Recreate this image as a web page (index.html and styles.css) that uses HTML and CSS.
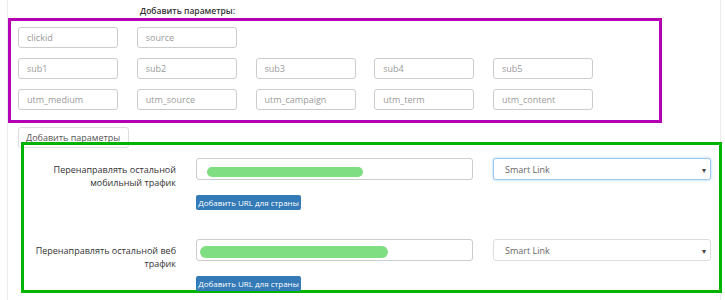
FILE: index.html
```html
<!DOCTYPE html>
<html>
<head>
	<meta charset="utf-8">
	<link rel="stylesheet" href="styles.css">
</head>
<body>
	<div class="panel">
		<div class="params-title">Добавить параметры:</div>

		<div class="params-box">
			<div class="params-grid">
				<input type="text" placeholder="clickid">
				<input type="text" placeholder="source">
				<span></span><span></span><span></span>

				<input type="text" placeholder="sub1">
				<input type="text" placeholder="sub2">
				<input type="text" placeholder="sub3">
				<input type="text" placeholder="sub4">
				<input type="text" placeholder="sub5">

				<input type="text" placeholder="utm_medium">
				<input type="text" placeholder="utm_source">
				<input type="text" placeholder="utm_campaign">
				<input type="text" placeholder="utm_term">
				<input type="text" placeholder="utm_content">
			</div>
		</div>

		<button class="tab-button">Добавить параметры</button>

		<div class="redirect-box">
			<div class="redirect-row">
				<label class="redirect-label">Перенаправлять остальной мобильный трафик</label>
				<div class="url-col">
					<div class="url-input"><span class="hidden-url bar-1"></span></div>
					<button class="add-url">Добавить URL для страны</button>
				</div>
				<div class="link-select focused">Smart Link <span class="caret">&#9662;</span></div>
			</div>

			<div class="redirect-row second">
				<label class="redirect-label">Перенаправлять остальной веб трафик</label>
				<div class="url-col">
					<div class="url-input"><span class="hidden-url bar-2"></span></div>
					<button class="add-url">Добавить URL для страны</button>
				</div>
				<div class="link-select">Smart Link <span class="caret">&#9662;</span></div>
			</div>
		</div>
	</div>
</body>
</html>
```

FILE: styles.css
```css
body {
	margin: 0;
	padding: 0;
	background: #fff;
	font-family: "Open Sans", "Liberation Sans", sans-serif;
	overflow: hidden;
}

.panel {
	margin-left: 7px;
	width: 712px;
	height: 300px;
	border-left: 1px solid #ececec;
	border-right: 1px solid #ececec;
}

.params-title {
	padding: 3px 0 0 132px;
	height: 15px;
	line-height: 15px;
	font-size: 8.5px;
	font-weight: 600;
	color: #333;
}

.params-box {
	width: 641px;
	border: 3px solid #b400b4;
	padding: 6px 0 10px 7px;
}

.params-grid {
	display: grid;
	grid-template-columns: repeat(5, 100px);
	column-gap: 18.75px;
	row-gap: 10px;
}

.params-grid input {
	box-sizing: border-box;
	width: 100px;
	height: 21px;
	border: 1px solid #ccc;
	border-radius: 3px;
	padding: 0 8px;
	font-family: inherit;
	font-size: 9px;
	background: #fff;
}

.params-grid input::placeholder {
	color: #9a9a9a;
}

.tab-button {
	display: block;
	box-sizing: border-box;
	margin: 4px 0 0 10px;
	width: 111px;
	height: 21px;
	padding: 0 0 0 7px;
	text-align: left;
	background: #fff;
	border: 1px solid #ddd;
	border-radius: 3px;
	font-family: inherit;
	font-size: 9px;
	color: #555;
}

.redirect-box {
	position: relative;
	margin: -6px 0 0 13px;
	width: 691px;
	height: 145px;
	border: 3px solid #00b400;
	padding: 0 0 0 4px;
	box-sizing: content-box;
}

.redirect-row {
	display: flex;
	align-items: flex-start;
	column-gap: 20px;
	padding-top: 13px;
}

.redirect-row.second {
	padding-top: 29px;
}

.redirect-label {
	width: 148px;
	padding-top: 5px;
	text-align: right;
	font-size: 9px;
	line-height: 13px;
	color: #333;
}

.url-col {
	width: 277px;
}

.url-input {
	box-sizing: border-box;
	height: 22px;
	border: 1px solid #ccc;
	border-radius: 3px;
	background: #fff;
	padding: 8px 0 0 10px;
}

.hidden-url {
	display: block;
	height: 10px;
	border-radius: 6px;
	background: #7fdd82;
	filter: blur(0.6px);
}

.bar-1 {
	width: 156px;
}

.bar-2 {
	width: 188px;
	height: 12px;
	margin: -2px 0 0 -7px;
}

.add-url {
	display: block;
	margin-top: 15px;
	width: 105px;
	height: 15px;
	padding: 0;
	border: none;
	border-radius: 2px;
	background: #337ab7;
	color: #fff;
	font-family: inherit;
	font-size: 8px;
	line-height: 15px;
	text-align: center;
	white-space: nowrap;
}

.link-select {
	box-sizing: border-box;
	width: 218px;
	height: 22px;
	padding: 0 0 0 11px;
	display: flex;
	align-items: center;
	justify-content: space-between;
	border: 1px solid #ddd;
	border-radius: 3px;
	background: #fff;
	font-size: 9px;
	color: #666;
}

.link-select.focused {
	border-color: #9cc8ef;
	box-shadow: 0 0 3px rgba(102, 175, 233, 0.6);
}

.caret {
	font-size: 8px;
	color: #444;
	padding-right: 4px;
}
```
